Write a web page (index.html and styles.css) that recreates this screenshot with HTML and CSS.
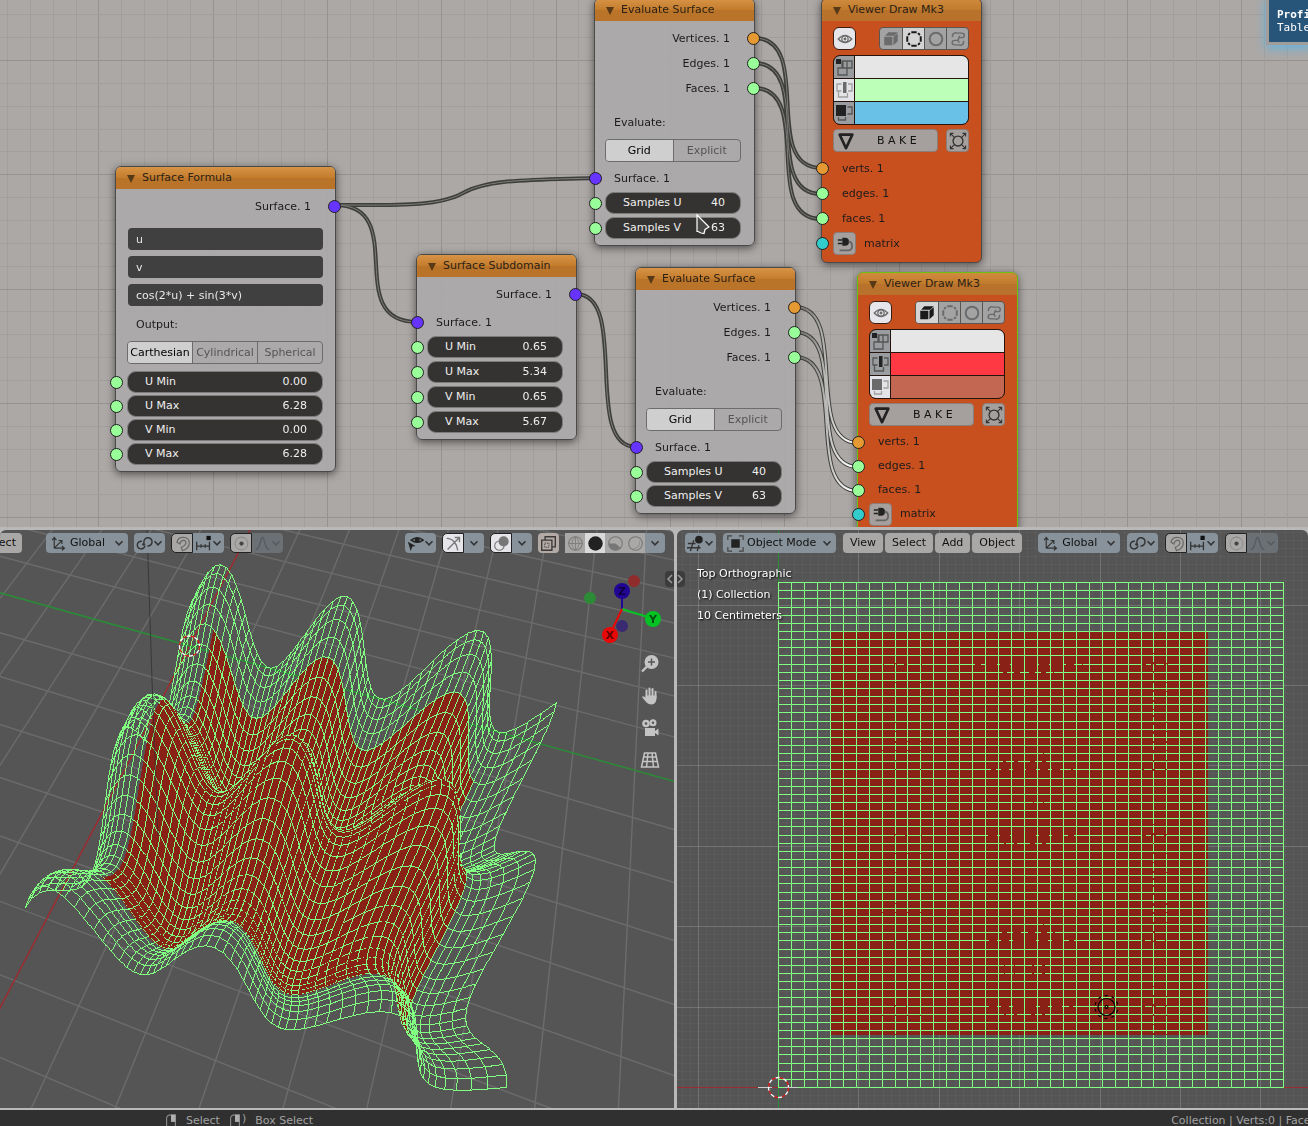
FILE: index.html
```html
<!DOCTYPE html>
<html lang="en">
<head>
<meta charset="utf-8">
<title>Surface nodes</title>
<link rel="stylesheet" href="styles.css">
</head>
<body>
<svg class="sprite" aria-hidden="true">
  <symbol id="i-chev" viewBox="0 0 10 10"><path d="M1.500 3.200 5 6.800 8.500 3.200" fill="none" stroke="currentColor" stroke-width="1.500"/></symbol>
  <symbol id="i-eye" viewBox="0 0 20 20"><path d="M2.500 10Q10 2 17.500 10Q10 18 2.500 10Z" fill="none" stroke="currentColor" stroke-width="1.400"/><circle cx="10" cy="10" r="3.500" fill="none" stroke="currentColor" stroke-width="1.400"/><circle cx="10" cy="10" r="1.600" fill="currentColor"/></symbol>
  <symbol id="i-cube" viewBox="0 0 20 20"><path d="M2.500 7.500h9v9.500h-9zM3.500 6.300 7 2.500h10.500L13.500 6.300zM12.700 7.500 17.500 3.500v9L12.700 17z" fill="currentColor"/></symbol>
  <symbol id="i-dash" viewBox="0 0 20 20"><path d="M7 2.500h6M7 17.500h6M2.500 7v6M17.500 7v6M3.500 5.500l2-2M14.500 3.500l2 2M3.500 14.500l2 2M16.500 14.500l-2 2" fill="none" stroke="currentColor" stroke-width="2.200"/></symbol>
  <symbol id="i-ring" viewBox="0 0 20 20"><circle cx="10" cy="10" r="7" fill="none" stroke="currentColor" stroke-width="2.200"/></symbol>
  <symbol id="i-snake" viewBox="0 0 20 20"><path d="M4 8C3 3.500 7 2.500 9 3.500h5c4 0 4 5 0 5h-3M16 12c1 4.500-3 5.500-5 4.500H6.500c-4 0-4-5 0-5H9c3 0 1-5 3.500-5M9 11.500c3 0 0 2 3 2" fill="none" stroke="currentColor" stroke-width="1.600"/></symbol>
  <symbol id="i-verts" viewBox="0 0 20 22"><path d="M2 3h5v5H2z" fill="#222"/><path d="M8 5h10v7H8zM4 12h9v7H4zM9 5v7M13 5v7" fill="none" stroke="currentColor" stroke-width="1.300"/></symbol>
  <symbol id="i-edges" viewBox="0 0 20 22"><path d="M9 3h3.500v11H9z" fill="var(--fill,#222)"/><path d="M7.500 5H3v7h4.500M14 5h4v7h-4M4.500 12v6h9v-4" fill="none" stroke="currentColor" stroke-width="1.300"/></symbol>
  <symbol id="i-faces" viewBox="0 0 20 22"><path d="M2 3h10v11H2z" fill="var(--fill,#222)"/><path d="M13.500 5H18v7h-4.500M4.500 15v3h7v-3" fill="none" stroke="currentColor" stroke-width="1.300"/></symbol>
  <symbol id="i-bake" viewBox="0 0 20 20"><path d="M3 3h14l-7 15z" fill="none" stroke="#222" stroke-width="3" stroke-linejoin="round"/></symbol>
  <symbol id="i-target" viewBox="0 0 20 20"><circle cx="10" cy="10" r="5.500" fill="none" stroke="#333" stroke-width="1.500"/><path d="M1.500 5V1.500H5M15 1.500h3.500V5M1.500 15v3.500H5M15 18.500h3.500V15M2 2l4 4M18 2l-4 4M2 18l4-4M18 18l-4-4" fill="none" stroke="#333" stroke-width="1.200"/></symbol>
  <symbol id="i-plug" viewBox="0 0 20 20"><path d="M7 3h3a4.500 4.500 0 0 1 0 9H7z" fill="#222"/><path d="M2 5.500h5M2 9.500h5" stroke="#222" stroke-width="1.600"/><path d="M14 7.500c5 0 5.500 9.500 0 9.500H4" fill="none" stroke="#666" stroke-width="2"/></symbol>
  <symbol id="i-axes" viewBox="0 0 20 20"><path d="M5 3v12.500M2.500 6 5 2.800 7.500 6M5 15.500h12M14 13l3 2.500-3 2.500M5 15.500 13.500 7M10 6.500h4v4" fill="none" stroke="currentColor" stroke-width="1.400"/></symbol>
  <symbol id="i-link" viewBox="0 0 20 20"><path d="M10.500 12.500a4.500 4.500 0 1 1-3.500-5M9.500 9.500a4.800 4.800 0 1 1 4 3.300" fill="none" stroke="currentColor" stroke-width="1.700"/><circle cx="9" cy="11" r="1.700" fill="currentColor"/></symbol>
  <symbol id="i-magnet" viewBox="0 0 20 20"><path d="M3.500 8.500C5 .500 18 1 18 9c0 4-3 8-8 9.500l-1.500-4C12 13 14 12 14 9c0-4-6-4-7 1.500z" fill="none" stroke="#6c6a68" stroke-width="1.500"/></symbol>
  <symbol id="i-snap" viewBox="0 0 20 20"><path d="M2 8v10M17 8v10M2 13h15M7 11v4M12 11v4" fill="none" stroke="currentColor" stroke-width="1.500"/><path d="M13.500 1h5v5h-5z" fill="#111"/></symbol>
  <symbol id="i-prop" viewBox="0 0 20 20"><circle cx="10" cy="10" r="7.500" fill="none" stroke="#8e8c8a" stroke-width="1.200"/><circle cx="10" cy="10" r="2.500" fill="#444"/></symbol>
  <symbol id="i-bell" viewBox="0 0 20 20"><path d="M2 17c6 0 5-14 8-14s2 14 8 14" fill="none" stroke="currentColor" stroke-width="1.600"/></symbol>
  <symbol id="i-vis" viewBox="0 0 20 20"><path d="M5 6Q12 .500 19 6Q12 11 5 6Z" fill="none" stroke="#222" stroke-width="1.700"/><circle cx="12" cy="6" r="3" fill="#222"/><path d="M1 8l9 5-4 .8L4.500 19z" fill="#222"/></symbol>
  <symbol id="i-gizmo" viewBox="0 0 20 20"><path d="M2 4c7 0 12 6 13 14M3 17 17 3M11.500 3H17v5.500" fill="none" stroke="#777" stroke-width="1.600"/></symbol>
  <symbol id="i-over" viewBox="0 0 20 20"><circle cx="12.500" cy="7.500" r="6" fill="#777"/><circle cx="7.500" cy="12.500" r="5.500" fill="none" stroke="#777" stroke-width="1.300"/></symbol>
  <symbol id="i-xray" viewBox="0 0 20 20"><path d="M2 6h12v12H2zM6 6V2h12v12h-4" fill="none" stroke="#3a3836" stroke-width="1.600"/><path d="M5.500 9.500h5v5h-5z" fill="none" stroke="#3a3836" stroke-dasharray="1.500 1"/></symbol>
  <symbol id="i-wire" viewBox="0 0 20 20"><circle cx="10" cy="10" r="8" fill="none" stroke="#7c7a78" stroke-width="1.300"/><path d="M2 10h16M10 2v16M10 2c-5.500 5-5.500 11 0 16M10 2c5.500 5 5.500 11 0 16" fill="none" stroke="#7c7a78"/></symbol>
  <symbol id="i-solid" viewBox="0 0 20 20"><circle cx="10" cy="10" r="8.500" fill="#222"/></symbol>
  <symbol id="i-mat" viewBox="0 0 20 20"><circle cx="10" cy="10" r="8" fill="none" stroke="#777" stroke-width="1.300"/><path d="M10 2v8H2a8 8 0 0 0 14 5l-6-5V2z" fill="#777"/></symbol>
  <symbol id="i-rend" viewBox="0 0 20 20"><circle cx="10" cy="10" r="8" fill="none" stroke="#777" stroke-width="1.300"/><path d="M5 15c6 2 11-3 9-9 4 5-2 13-9 9z" fill="#888"/></symbol>
  <symbol id="i-editor" viewBox="0 0 20 20"><path d="M8 6 4 19M14 12l-2 7M1 10h9M0 15h16" fill="none" stroke="currentColor" stroke-width="1.600"/><circle cx="14" cy="5.500" r="4.500" fill="#222"/></symbol>
  <symbol id="i-object" viewBox="0 0 20 20"><path d="M1 6V1h5M14 1h5v5M19 14v5h-5M6 19H1v-5" fill="none" stroke="#444" stroke-width="1.400"/><path d="M5 5h10v10H5z" fill="#222"/></symbol>
  <symbol id="i-zoom" viewBox="0 0 20 20"><circle cx="11.500" cy="8" r="7" fill="#c4c4c4"/><path d="M7 12.500 2 17.500" stroke="#c4c4c4" stroke-width="2.400"/><path d="M11.500 4.500v7M8 8h7" stroke="#555" stroke-width="1.500"/></symbol>
  <symbol id="i-hand" viewBox="0 0 20 20"><path d="M6.500 11V4.500M9.500 10V2.500M12.500 10V3M15.500 11.500V6" stroke="#c4c4c4" stroke-width="2" stroke-linecap="round"/><path d="M5.500 9.500h11c.5 5-1 9-5 9s-6-3-9.500-7.500c1-1.500 2.500-.5 3.500 1z" fill="#c4c4c4"/></symbol>
  <symbol id="i-cam" viewBox="0 0 20 20"><circle cx="6" cy="5.500" r="3.800" fill="#c4c4c4"/><circle cx="13" cy="4.800" r="3.500" fill="#c4c4c4"/><circle cx="6" cy="5.500" r="1.300" fill="#555"/><circle cx="13" cy="4.800" r="1.200" fill="#555"/><path d="M5 10h10v8H5zM15 13l3.500-2.500v7L15 15z" fill="#c4c4c4"/></symbol>
  <symbol id="i-persp" viewBox="0 0 20 20"><path d="M4.500 3h11L18.500 17H1.500zM4 7h12M3 11.500h14M8 3 6.500 17M12 3l1.500 14" fill="none" stroke="#c4c4c4" stroke-width="1.500"/></symbol>
  <symbol id="i-mouse" viewBox="0 0 12 16"><path d="M1 16V5c0-3 2-4 5-4h5v15" fill="none" stroke="#8a8a8a" stroke-width="1.300"/><path d="M6 1h5v8H6z" fill="#b0b0b0"/></symbol>
</svg>

<main class="workspace">
  <section class="nodes" aria-label="Node editor">
    <canvas class="backdrop" id="node-grid"></canvas>
    <svg class="links" aria-hidden="true">
      <defs>
        <linearGradient id="sel" gradientUnits="userSpaceOnUse" x1="805" y1="0" x2="850" y2="0"><stop offset="0" stop-color="#7e7d7a"/><stop offset="1" stop-color="#fff"/></linearGradient>
        <path id="links-plain" d="M335 205C395 205 438 207 463 193C488 179 530 180 595 178M335 205C411 205 341 322 417 322M576 294C630 294 582 447 636 447M754 38C815 38 760 168 821 168M754 63C815 63 760 194 821 194M754 88C815 88 760 219 821 219"/>
        <path id="links-active" d="M795 307C850 307 803 443 858 443M795 332C850 332 803 467 858 467M795 357C850 357 803 491 858 491"/>
      </defs>
      <g class="link-out"><use href="#links-plain"/><use href="#links-active"/></g>
      <use class="link-core" href="#links-plain"/>
      <use class="link-sel" href="#links-active"/>
    </svg>

    <article class="node formula compact">
      <h2>Surface Formula</h2>
      <p class="row out s-blue">Surface. 1</p>
      <div class="fields">
        <input type="text" value="u" aria-label="Formula X"><input type="text" value="v" aria-label="Formula Y"><input type="text" value="cos(2*u) + sin(3*v)" aria-label="Formula Z">
      </div>
      <p class="caption">Output:</p>
      <div class="tabs"><button class="on">Carthesian</button><button>Cylindrical</button><button>Spherical</button></div>
      <div class="numbers">
        <label class="num s-green"><span>U Min</span><input value="0.00"></label>
        <label class="num s-green"><span>U Max</span><input value="6.28"></label>
        <label class="num s-green"><span>V Min</span><input value="0.00"></label>
        <label class="num s-green"><span>V Max</span><input value="6.28"></label>
      </div>
    </article>

    <article class="node subdomain">
      <h2>Surface Subdomain</h2>
      <p class="row out s-blue">Surface. 1</p>
      <p class="row in s-blue">Surface. 1</p>
      <div class="numbers">
        <label class="num s-green"><span>U Min</span><input value="0.65"></label>
        <label class="num s-green"><span>U Max</span><input value="5.34"></label>
        <label class="num s-green"><span>V Min</span><input value="0.65"></label>
        <label class="num s-green"><span>V Max</span><input value="5.67"></label>
      </div>
    </article>

    <article class="node evaluate eval-a">
      <h2>Evaluate Surface</h2>
      <p class="row out s-orange">Vertices. 1</p>
      <p class="row out s-green">Edges. 1</p>
      <p class="row out s-green">Faces. 1</p>
      <p class="caption">Evaluate:</p>
      <div class="tabs"><button class="on">Grid</button><button>Explicit</button></div>
      <p class="row in s-blue">Surface. 1</p>
      <div class="numbers">
        <label class="num s-green"><span>Samples U</span><input value="40"></label>
        <label class="num s-green"><span>Samples V</span><input value="63"></label>
      </div>
    </article>

    <article class="node evaluate eval-b compact">
      <h2>Evaluate Surface</h2>
      <p class="row out s-orange">Vertices. 1</p>
      <p class="row out s-green">Edges. 1</p>
      <p class="row out s-green">Faces. 1</p>
      <p class="caption">Evaluate:</p>
      <div class="tabs"><button class="on">Grid</button><button>Explicit</button></div>
      <p class="row in s-blue">Surface. 1</p>
      <div class="numbers">
        <label class="num s-green"><span>Samples U</span><input value="40"></label>
        <label class="num s-green"><span>Samples V</span><input value="63"></label>
      </div>
    </article>

    <article class="node viewer view-a">
      <h2>Viewer Draw Mk3</h2>
      <div class="bar">
        <button class="eye" aria-label="Show"><svg><use href="#i-eye"/></svg></button>
        <div class="modes">
          <button aria-label="Shaded"><svg><use href="#i-cube"/></svg></button><button class="on" aria-label="Wire"><svg><use href="#i-dash"/></svg></button><button aria-label="Smooth"><svg><use href="#i-ring"/></svg></button><button aria-label="Script"><svg><use href="#i-snake"/></svg></button>
        </div>
      </div>
      <div class="palette">
        <button aria-label="Vertices"><svg><use href="#i-verts"/></svg></button><span class="c-white"></span>
        <button class="on" aria-label="Edges"><svg><use href="#i-edges"/></svg></button><span class="c-mint"></span>
        <button aria-label="Faces"><svg><use href="#i-faces"/></svg></button><span class="c-sky"></span>
      </div>
      <div class="bar bake">
        <button class="wide"><svg><use href="#i-bake"/></svg><span>B A K E</span></button>
        <button class="small" aria-label="Focus"><svg><use href="#i-target"/></svg></button>
      </div>
      <p class="row in s-orange">verts. 1</p>
      <p class="row in s-green">edges. 1</p>
      <p class="row in s-green">faces. 1</p>
      <p class="row in matrix s-cyan"><button class="small" aria-label="Plug"><svg><use href="#i-plug"/></svg></button>matrix</p>
    </article>

    <article class="node viewer view-b active compact">
      <h2>Viewer Draw Mk3</h2>
      <div class="bar">
        <button class="eye" aria-label="Show"><svg><use href="#i-eye"/></svg></button>
        <div class="modes">
          <button class="on" aria-label="Shaded"><svg><use href="#i-cube"/></svg></button><button aria-label="Wire"><svg><use href="#i-dash"/></svg></button><button aria-label="Smooth"><svg><use href="#i-ring"/></svg></button><button aria-label="Script"><svg><use href="#i-snake"/></svg></button>
        </div>
      </div>
      <div class="palette">
        <button aria-label="Vertices"><svg><use href="#i-verts"/></svg></button><span class="c-white"></span>
        <button aria-label="Edges"><svg><use href="#i-edges"/></svg></button><span class="c-red"></span>
        <button class="on" aria-label="Faces"><svg><use href="#i-faces"/></svg></button><span class="c-rust"></span>
      </div>
      <div class="bar bake">
        <button class="wide"><svg><use href="#i-bake"/></svg><span>B A K E</span></button>
        <button class="small" aria-label="Focus"><svg><use href="#i-target"/></svg></button>
      </div>
      <p class="row in s-orange">verts. 1</p>
      <p class="row in s-green">edges. 1</p>
      <p class="row in s-green">faces. 1</p>
      <p class="row in matrix s-cyan"><button class="small" aria-label="Plug"><svg><use href="#i-plug"/></svg></button>matrix</p>
    </article>

    <svg class="pointer" viewBox="0 0 16 24" aria-hidden="true"><path d="M2 2 14 14 10 16.500 9 20.500 6 20 3 18.500 2 18.500Z" fill="#4a4a48" stroke="#fff" stroke-width="1.200"/></svg>
    <aside class="profile"><b>Profile</b><br>Table</aside>
  </section>

  <section class="view left" aria-label="Perspective viewport">
    <canvas class="backdrop" id="persp"></canvas>
    <header class="tools">
      <button class="menu cut">Select</button>
      <label class="drop orient"><svg><use href="#i-axes"/></svg><select aria-label="Orientation"><option>Global</option></select><svg class="chev"><use href="#i-chev"/></svg></label>
      <button class="drop" aria-label="Pivot"><svg><use href="#i-link"/></svg><svg class="chev"><use href="#i-chev"/></svg></button>
      <div class="pair"><button class="tog" aria-label="Snap"><svg><use href="#i-magnet"/></svg></button><button class="drop" aria-label="Snap to"><svg><use href="#i-snap"/></svg><svg class="chev"><use href="#i-chev"/></svg></button></div>
      <div class="pair"><button class="tog" aria-label="Proportional"><svg><use href="#i-prop"/></svg></button><button class="drop faded" aria-label="Falloff"><svg><use href="#i-bell"/></svg><svg class="chev"><use href="#i-chev"/></svg></button></div>
      <span class="space"></span>
      <button class="drop" aria-label="Visibility"><svg><use href="#i-vis"/></svg><svg class="chev"><use href="#i-chev"/></svg></button>
      <div class="pair"><button class="tog lit" aria-label="Gizmo"><svg><use href="#i-gizmo"/></svg></button><button class="drop slim" aria-label="Gizmo options"><svg class="chev"><use href="#i-chev"/></svg></button></div>
      <div class="pair"><button class="tog lit" aria-label="Overlays"><svg><use href="#i-over"/></svg></button><button class="drop slim" aria-label="Overlay options"><svg class="chev"><use href="#i-chev"/></svg></button></div>
      <button class="xray" aria-label="X-ray"><svg><use href="#i-xray"/></svg></button>
      <div class="pair shading"><button aria-label="Wireframe"><svg><use href="#i-wire"/></svg></button><button class="on" aria-label="Solid"><svg><use href="#i-solid"/></svg></button><button aria-label="Material"><svg><use href="#i-mat"/></svg></button><button aria-label="Rendered"><svg><use href="#i-rend"/></svg></button><button class="drop slim" aria-label="Shading options"><svg class="chev"><use href="#i-chev"/></svg></button></div>
    </header>
    <svg class="axes" viewBox="0 0 90 80" aria-label="Axis gizmo">
      <circle cx="57" cy="11" r="6" fill="#902c2c"/><circle cx="13" cy="28" r="6" fill="#2c8c36"/><circle cx="45" cy="56" r="6" fill="#3a2a72"/>
      <path d="M45 39V22" stroke="#1e0a96" stroke-width="2"/><path d="M45 39 74 48" stroke="#04c224" stroke-width="2"/><path d="M45 39 33 64" stroke="#e80808" stroke-width="2"/>
      <circle cx="45" cy="21" r="8" fill="#210696"/><circle cx="76" cy="49" r="8" fill="#04c224"/><circle cx="33" cy="65" r="8" fill="#e80808"/>
      <text x="45" y="25">Z</text><text x="76" y="53">Y</text><text x="33" y="69">X</text>
    </svg>
    <nav class="navigate">
      <button aria-label="Zoom"><svg><use href="#i-zoom"/></svg></button><button aria-label="Pan"><svg><use href="#i-hand"/></svg></button><button aria-label="Camera"><svg><use href="#i-cam"/></svg></button><button aria-label="Perspective"><svg><use href="#i-persp"/></svg></button>
    </nav>
  </section>

  <section class="view right" aria-label="Top viewport">
    <canvas class="backdrop" id="top"></canvas>
    <header class="tools">
      <button class="drop" aria-label="Editor type"><svg><use href="#i-editor"/></svg><svg class="chev"><use href="#i-chev"/></svg></button>
      <label class="drop mode"><svg><use href="#i-object"/></svg><select aria-label="Mode"><option>Object Mode</option></select><svg class="chev"><use href="#i-chev"/></svg></label>
      <div class="menus"><button class="menu">View</button><button class="menu">Select</button><button class="menu">Add</button><button class="menu">Object</button></div>
      <label class="drop orient"><svg><use href="#i-axes"/></svg><select aria-label="Orientation"><option>Global</option></select><svg class="chev"><use href="#i-chev"/></svg></label>
      <button class="drop" aria-label="Pivot"><svg><use href="#i-link"/></svg><svg class="chev"><use href="#i-chev"/></svg></button>
      <div class="pair"><button class="tog" aria-label="Snap"><svg><use href="#i-magnet"/></svg></button><button class="drop" aria-label="Snap to"><svg><use href="#i-snap"/></svg><svg class="chev"><use href="#i-chev"/></svg></button></div>
      <div class="pair"><button class="tog" aria-label="Proportional"><svg><use href="#i-prop"/></svg></button><button class="drop faded" aria-label="Falloff"><svg><use href="#i-bell"/></svg><svg class="chev"><use href="#i-chev"/></svg></button></div>
    </header>
    <div class="info"><p>Top Orthographic</p><p>(1) Collection</p><p>10 Centimeters</p></div>
  </section>
  <svg class="splitter" viewBox="0 0 20 16" aria-hidden="true"><rect width="20" height="16" rx="4" fill="#3c3c3c"/><path d="M9 0h3v16H9z" fill="#b9b9b9"/><path d="M7 4 3 8l4 4M13 4l4 4-4 4" fill="none" stroke="#999" stroke-width="1.500"/></svg>
</main>
<footer class="status">
  <svg><use href="#i-mouse"/></svg><span>Select</span><svg><use href="#i-mouse"/></svg><i>)</i><span>Box Select</span>
  <span class="stats">Collection | Verts:0 | Faces:0</span>
</footer>
<script src="scene.js"></script>
</body>
</html>
```
FILE: styles.css
```css
* { box-sizing: border-box; }
body {
  margin: 0;
  height: 100vh;
  display: flex;
  flex-direction: column;
  overflow: hidden;
  background: #303030;
  color: #1c1c1c;
  font: 11px/14px "DejaVu Sans", sans-serif;
}
h2, p { margin: 0; font: inherit; }
button, input, select { font: inherit; color: inherit; margin: 0; padding: 0; border: 0; background: none; }
button { display: flex; align-items: center; justify-content: center; }
svg { display: block; flex: none; }
.sprite { position: absolute; width: 0; height: 0; }

.workspace {
  position: relative;
  flex: 1;
  min-height: 0;
  display: grid;
  grid-template: minmax(0, 527fr) minmax(0, 578fr) / minmax(0, 674fr) minmax(0, 631fr);
  gap: 3px;
  padding-bottom: 2px;
  background: #b9b9b9;
}
.nodes { grid-column: 1 / 3; position: relative; overflow: hidden; background: #aca8a6; }
.view { position: relative; overflow: hidden; border-radius: 6px 6px 0 0; background: #555; }
.backdrop, .links { position: absolute; inset: 0; width: 100%; height: 100%; }
.links { fill: none; }
.link-out { stroke: #3e3f3d; stroke-width: 4; }
.link-core { stroke: #7e7d7a; stroke-width: 1; }
.link-sel { stroke: url(#sel); stroke-width: 2; }

/* nodes */
.node {
  --pitch: 25px;
  position: absolute;
  border: 1px solid #4a4a49;
  border-radius: 6px;
  background: rgba(170, 169, 170, .92);
  box-shadow: 0 2px 8px rgba(0, 0, 0, .55);
  display: flex;
  flex-direction: column;
  padding-bottom: 6px;
}
.compact { --pitch: 24px; }
.node h2 {
  height: 22px;
  padding-left: 26px;
  margin-bottom: 5px;
  line-height: 22px;
  border-radius: 5px 5px 0 0;
  background: linear-gradient(#d79346, #c47c2c 50%, #ba742a 51%, #ba742a);
  color: #2b2115;
}
.node h2::before {
  content: "";
  position: absolute;
  left: 11px;
  top: 8px;
  border: solid transparent;
  border-width: 8px 4px 0;
  border-top-color: #573917;
}
.formula { left: 115px; top: 166px; width: 221px; }
.subdomain { left: 416px; top: 254px; width: 161px; }
.eval-a { left: 594px; top: -2px; width: 161px; }
.eval-b { left: 635px; top: 267px; width: 161px; }
.view-a { left: 821px; top: -2px; width: 161px; }
.view-b { left: 857px; top: 272px; width: 161px; }
.viewer { background: #c84f1e; }
.viewer h2 { background: linear-gradient(#cf8b3e, #c07a2c 50%, #b8722b 51%, #b8722b); }
.active { border-color: #6cc011; }

.row { position: relative; height: 25px; line-height: 25px; }
.row.out { text-align: right; padding-right: 24px; }
.row.in { padding-left: 19px; }
.row::before, .num::before {
  content: "";
  position: absolute;
  left: -6px;
  top: 6px;
  width: 11px;
  height: 11px;
  border: 1px solid #20201f;
  border-radius: 50%;
  background: var(--dot);
}
.row.out::before { left: auto; right: -6px; }
.s-blue { --dot: #6633ff; }
.s-green { --dot: #99ff99; }
.s-orange { --dot: #e59933; }
.s-cyan { --dot: #33cccc; }
.caption { height: 25px; line-height: 25px; padding-left: 19px; }
.evaluate .caption { margin: 9px 0 4px; }
.subdomain .in { margin-top: 3px; }

.fields { display: flex; flex-direction: column; gap: 6px; margin: 9px 12px 6px; }
.fields input { height: 22px; padding-left: 8px; border-radius: 4px; background: #404040; color: #e8e8e8; }
.formula .caption { padding-left: 20px; margin-bottom: 4px; }

.tabs {
  display: flex;
  height: 23px;
  margin: 0 13px 4px 10px;
  border: 1px solid #6c6c6c;
  border-radius: 4px;
  overflow: hidden;
}
.tabs button { flex: 1 1 0; color: #555; }
.tabs button + button { border-left: 1px solid #6c6c6c; }
.tabs .on { background: #cfcfcf; color: #000; }
.formula .tabs { margin: 0 12px 7px 11px; }

.numbers { display: flex; flex-direction: column; gap: calc(var(--pitch) - 22px); margin: 1px 13px 0 10px; }
.formula .numbers { margin: 0 12px 0 11px; }
.num {
  position: relative;
  display: flex;
  align-items: center;
  justify-content: space-between;
  height: 22px;
  padding: 0 15px 0 17px;
  border: 1px solid #7c7c7c;
  border-radius: 9px;
  background: #353331;
  color: #efefef;
  white-space: nowrap;
}
.num::before { top: 4px; left: -17px; }
.formula .num::before { left: -18px; }
.num input { width: 30px; text-align: right; }

/* viewer node */
.bar { display: flex; justify-content: space-between; margin: 0 12px 5px 11px; }
.viewer h2 + .bar { padding-top: 1px; }
.viewer button { color: #6b6b6b; }
.eye, .small, .wide { height: 23px; border: 1px solid #8b7d78; border-radius: 4px; background: #a5a09d; }
.eye, .small { width: 23px; }
.viewer .eye { background: #e6e6ea; border-color: #3a1c10; border-radius: 6px; }
.eye svg, .small svg, .modes svg { width: 18px; height: 18px; }
.modes { display: flex; border: 1px solid #5b5552; border-radius: 4px; overflow: hidden; background: #a3a3a3; }
.modes button { width: 22px; height: 21px; }
.modes button + button { border-left: 1px solid #5b5552; }
.modes .on { background: #d4d4d4; color: #1a1a1a; }
.palette {
  display: grid;
  grid-template-columns: 20px 1fr;
  grid-auto-rows: 22px;
  gap: 1px;
  margin: 0 12px 4px 11px;
  border: 1px solid #24140e;
  border-radius: 7px;
  overflow: hidden;
  background: #24140e;
}
.palette button { background: #9a9c9f; color: #555; }
.palette .on { background: #e4e4e8; color: #a0a0a0; --fill: #6a6a6a; }
.palette svg { width: 20px; height: 22px; }
.c-white { background: #e6e6e6; }
.c-mint { background: #bbffb8; }
.c-sky { background: #69c1e8; }
.c-red { background: #ff3943; }
.c-rust { background: #c36753; }
.bake { margin-bottom: 4px; }
.wide { flex: 1; margin-right: 8px; justify-content: flex-start; gap: 22px; padding-left: 3px; }
.wide svg { width: 18px; height: 18px; }
.viewer .wide { color: #111; }
.viewer .row { height: var(--pitch); line-height: var(--pitch); }
.viewer .row.in { padding-left: 20px; }
.viewer .row.matrix { display: flex; align-items: center; gap: 8px; padding-left: 11px; }

.pointer { position: absolute; left: 695px; top: 213px; width: 16px; height: 24px; }
.profile {
  position: absolute;
  left: 1266px;
  right: -4px;
  top: -3px;
  height: 48px;
  border: 3px solid #a19d9a;
  padding: 8px 0 0 8px;
  background: #27557a;
  color: #fff;
  font: 11px/13px "DejaVu Sans Mono", monospace;
  box-shadow: 0 3px 10px #63b4e0;
  overflow: hidden;
  white-space: nowrap;
}

/* viewport headers */
.tools { position: relative; display: flex; align-items: center; gap: 6px; height: 20px; margin-top: 3px; padding: 0 9px 0 8px; color: #333; }
.right .tools { gap: 7px; }
.tools button, .drop { height: 20px; }
.tools svg { width: 17px; height: 17px; }
.tools .chev { width: 10px; height: 10px; }
.drop { position: relative; display: flex; align-items: center; justify-content: space-between; width: 31px; padding: 0 2px; border-radius: 4px; background: #87929a; }
.drop select { flex: 1; min-width: 0; appearance: none; color: #111; padding-left: 3px; }
.orient, .mode { flex: none; padding: 0 4px; }
.orient { width: 82px; }
.mode { width: 113px; }
.menu { background: #aaa8a6; border-radius: 4px; color: #111; padding: 0 7px; }
.menus { display: flex; gap: 2px; margin-right: 9px; }
.cut { width: 46px; margin: 0 18px 0 -32px; flex: none; }
.pair { display: flex; }
.pair > * + *, .pair .drop { border-radius: 0 4px 4px 0; }
.tog { width: 22px; border: 1px solid #222; border-radius: 5px 0 0 5px; background: #aaa8a6; }
.lit { background: #e6e6ea; }
.faded { background: #6b7074; color: #555b60; }
.slim { width: 20px; }
.slim.drop { justify-content: center; }
.space { flex: 1; }
.xray { width: 21px; border-radius: 4px; background: #b3aaa5; }
.shading button { width: 20px; background: #aaa8a6; }
.shading button:first-child { border-radius: 4px 0 0 4px; }
.shading button:not(:last-child) { border-radius: 0; }
.shading .on { background: #dadada; }
.shading .drop { background: #87929a; }

.axes { position: absolute; right: 7px; top: 40px; width: 90px; height: 80px; }
.axes text { font-size: 11px; font-weight: bold; text-anchor: middle; fill: #000; fill-opacity: .6; }
.navigate { position: absolute; right: 14px; top: 124px; display: flex; flex-direction: column; gap: 12px; }
.navigate svg { width: 20px; height: 20px; }
.info { position: relative; margin: 10px 20px; color: #fff; line-height: 21px; text-shadow: 1px 1px 2px #000; }
.splitter { position: absolute; top: 571px; left: 665px; width: 20px; height: 16px; }

.status { display: flex; align-items: flex-start; gap: 9px; height: 16px; padding: 4px 0 0 165px; color: #a2a2a2; line-height: 14px; overflow: hidden; white-space: nowrap; }
.status svg { width: 12px; height: 14px; }
.status i { font-style: normal; margin: -2px 0 0 -8px; }
.stats { margin-left: auto; margin-right: -19px; }
```
FILE: scene.js
```js
const TAU = 6.28;
const camera = { azimuth: .37112, elevation: 1.01609, focal: 693.489, panX: -.28418, panY: 3.22392, distance: 13.19048, centerX: 174.62, centerY: 285.36 };

const height = (u, v) => Math.cos(2 * u) + Math.sin(3 * v);

/* World point to [x, y, nearness] in the perspective viewport. */
function project(x, y, z) {
  const s = Math.sin(camera.azimuth), c = Math.cos(camera.azimuth);
  const S = Math.sin(camera.elevation), C = Math.cos(camera.elevation);
  const g = c * x + s * y;
  const w = camera.distance - C * g - S * z;
  return [
    camera.centerX + camera.focal * (c * y - s * x - camera.panX) / w,
    camera.centerY + camera.focal * (S * g - C * z - camera.panY) / w,
    1 / w,
  ];
}

/* Samples the surface on a 40 by 63 grid. */
function sample(u0, u1, v0, v1, map) {
  const rows = [];
  for (let i = 0; i < 40; i++) {
    const row = [];
    for (let j = 0; j < 63; j++) {
      const u = u0 + (u1 - u0) * i / 39, v = v0 + (v1 - v0) * j / 62;
      row.push(map(u, v, height(u, v)));
    }
    rows.push(row);
  }
  return rows;
}

/* Depth-buffered faces and one-pixel edges. */
function rasterize(w, h, faces, wire, bias) {
  const image = new ImageData(w, h);
  const px = new Uint32Array(image.data.buffer);
  const depth = new Float32Array(w * h).fill(-1e9);
  const RED = 0xff16218a, GREEN = 0xff80ff80;
  const tri = (a, b, c) => {
    const area = (b[0] - a[0]) * (c[1] - a[1]) - (b[1] - a[1]) * (c[0] - a[0]);
    if (!area) return;
    const x0 = Math.max(0, Math.floor(Math.min(a[0], b[0], c[0]))), x1 = Math.min(w - 1, Math.ceil(Math.max(a[0], b[0], c[0])));
    const y0 = Math.max(0, Math.floor(Math.min(a[1], b[1], c[1]))), y1 = Math.min(h - 1, Math.ceil(Math.max(a[1], b[1], c[1])));
    for (let y = y0; y <= y1; y++) for (let x = x0; x <= x1; x++) {
      const X = x + .5, Y = y + .5;
      const k = ((b[0] - X) * (c[1] - Y) - (b[1] - Y) * (c[0] - X)) / area;
      const l = ((c[0] - X) * (a[1] - Y) - (c[1] - Y) * (a[0] - X)) / area;
      const m = 1 - k - l;
      if (k < -1e-6 || l < -1e-6 || m < -1e-6) continue;
      const d = k * a[2] + l * b[2] + m * c[2], at = y * w + x;
      if (d > depth[at]) { depth[at] = d; px[at] = RED; }
    }
  };
  const line = (a, b) => {
    const n = Math.max(1, Math.ceil(Math.max(Math.abs(b[0] - a[0]), Math.abs(b[1] - a[1]))));
    for (let i = 0; i <= n; i++) {
      const t = i / n, x = Math.floor(a[0] + (b[0] - a[0]) * t), y = Math.floor(a[1] + (b[1] - a[1]) * t);
      if (x < 0 || y < 0 || x >= w || y >= h) continue;
      const at = y * w + x;
      if (a[2] + (b[2] - a[2]) * t + bias >= depth[at]) px[at] = GREEN;
    }
  };
  for (let i = 0; i < 39; i++) for (let j = 0; j < 62; j++) {
    tri(faces[i][j], faces[i + 1][j], faces[i + 1][j + 1]);
    tri(faces[i][j], faces[i + 1][j + 1], faces[i][j + 1]);
  }
  for (let i = 0; i < 40; i++) for (let j = 0; j < 63; j++) {
    if (i < 39) line(wire[i][j], wire[i + 1][j]);
    if (j < 62) line(wire[i][j], wire[i][j + 1]);
  }
  return image;
}

function open(id) {
  const el = document.getElementById(id);
  el.width = el.clientWidth;
  el.height = el.clientHeight;
  return [el.getContext('2d'), el.width, el.height];
}
function stroke(ctx, color, width, ...points) {
  ctx.strokeStyle = color;
  ctx.lineWidth = width;
  ctx.beginPath();
  for (const p of points) ctx.lineTo(p[0], p[1]);
  ctx.stroke();
}
function stamp(ctx, image) {
  const layer = document.createElement('canvas');
  layer.width = image.width;
  layer.height = image.height;
  layer.getContext('2d').putImageData(image, 0, 0);
  ctx.drawImage(layer, 0, 0);
}
/* The 3D cursor: a red and white dashed ring. */
function cursor(ctx, x, y) {
  for (const [color, shift] of [['#e01818', 0], ['#ffffff', 4]]) {
    ctx.setLineDash([4, 4]);
    ctx.lineDashOffset = shift;
    ctx.strokeStyle = color;
    ctx.lineWidth = 1.3;
    ctx.beginPath();
    ctx.arc(x, y, 10, 0, 7);
    ctx.stroke();
  }
  ctx.setLineDash([]);
}

function drawNodeGrid() {
  const [ctx, w, h] = open('node-grid');
  const step = 114.3 / 5;
  for (let i = -60; i < 60; i++) {
    const x = Math.round(327 + i * step), y = Math.round(60 + i * step);
    ctx.fillStyle = i % 5 ? '#a29e9c' : '#969290';
    ctx.fillRect(x, 0, 1, h);
    ctx.fillRect(0, y, w, 1);
  }
}

function drawPerspective() {
  const [ctx, w, h] = open('persp');
  for (let i = -16; i <= 16; i++) {
    if (!i) continue;
    stroke(ctx, '#6c6c6c', 1.4, project(i, -16, 0), project(i, 16, 0));
    stroke(ctx, '#6c6c6c', 1.4, project(-16, i, 0), project(11, i, 0));
  }
  stroke(ctx, '#9c2c30', 1.5, project(-16, 0, 0), project(11, 0, 0));
  stroke(ctx, '#2b8c37', 1.5, project(0, -16, 0), project(0, 14, 0));
  const faces = sample(.65, 5.34, .65, 5.67, project), wire = sample(0, TAU, 0, TAU, project);
  stamp(ctx, rasterize(w, h, faces, wire, 1e-4));
  stroke(ctx, 'rgba(50,50,50,.8)', 1, [147, 0], [152, 150], [158, 306]);
  cursor(ctx, 189.5, 116);
}

function drawTop() {
  const [ctx, w, h] = open('top');
  const unit = 80.4, ox = 101.5, oy = 557.5;
  const map = (x, y, z) => [ox + x * unit, oy - y * unit, z];
  for (let i = -20; i < 80; i++) {
    ctx.fillStyle = i % 10 ? 'rgba(255,255,255,.03)' : 'rgba(255,255,255,.17)';
    ctx.fillRect(Math.floor(ox + i * unit / 10), 0, 1, h);
    ctx.fillRect(0, Math.floor(oy - i * unit / 10), w, 1);
  }
  ctx.fillStyle = '#9c2c30';
  ctx.fillRect(0, 557, w, 1);
  ctx.fillStyle = '#2b8c37';
  ctx.fillRect(101, 0, 1, h);
  const faces = sample(.65, 5.34, .65, 5.67, map), wire = sample(0, TAU, 0, TAU, map);
  stamp(ctx, rasterize(w, h, faces, wire, .015));
  stroke(ctx, '#ccc', 1, [81, 557.5], [95, 557.5]);
  stroke(ctx, '#ccc', 1, [108, 557.5], [121, 557.5]);
  cursor(ctx, ox, oy);
  ctx.strokeStyle = '#000';
  ctx.lineWidth = 1.2;
  for (const [r, dash] of [[8.5, []], [1.5, []], [11.5, [3, 4]]]) {
    ctx.setLineDash(dash);
    ctx.beginPath();
    ctx.arc(429.5, 477, r, 0, 7);
    ctx.stroke();
  }
}

function draw() { drawNodeGrid(); drawPerspective(); drawTop(); }
draw();
addEventListener('resize', draw);
```
